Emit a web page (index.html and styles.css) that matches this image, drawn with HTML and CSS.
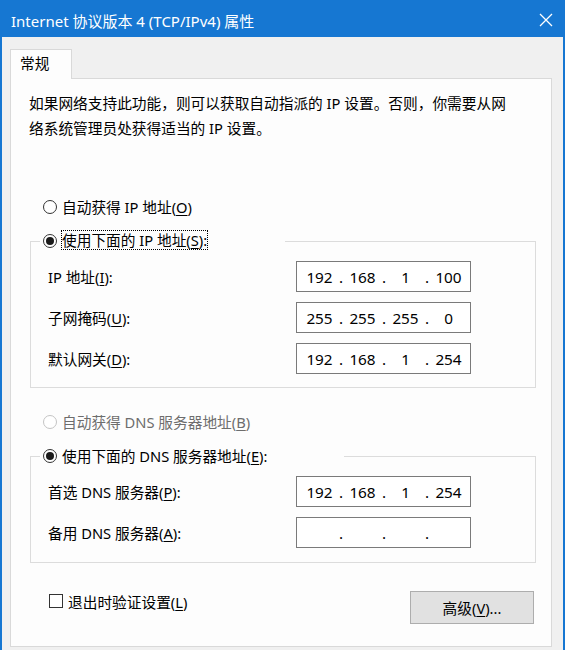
FILE: index.html
```html
<!DOCTYPE html>
<html lang="zh-CN">
<head>
<meta charset="utf-8">
<title>Internet 协议版本 4 (TCP/IPv4) 属性</title>
<link rel="stylesheet" href="styles.css">
</head>
<body>
<div class="window">
  <header class="titlebar">
    <span class="title">Internet 协议版本 4 (TCP/IPv4) 属性</span>
    <svg class="close" width="14" height="14" viewBox="0 0 14 14" aria-label="关闭">
      <path d="M1 1 L13 13 M13 1 L1 13" stroke="#fff" stroke-width="1.3" fill="none"/>
    </svg>
  </header>

  <div class="client">
    <div class="tabs">
      <div class="tab">常规</div>
    </div>

    <div class="panel">
      <p class="intro">如果网络支持此功能，则可以获取自动指派的 IP 设置。否则，你需要从网<br>络系统管理员处获得适当的 IP 设置。</p>

      <div class="radio auto-ip">
        <span class="circle"></span>
        <span class="text">自动获得 IP 地址(<u>O</u>)</span>
      </div>

      <fieldset class="group ip-group">
        <legend class="radio legend-ip">
          <span class="circle checked"></span>
          <span class="text focus">使用下面的 IP 地址(<u>S</u>):</span>
        </legend>
        <div class="rows">
          <div class="row">
            <span class="lbl">IP 地址(<u>I</u>):</span>
            <div class="ip"><span class="seg">192</span><span class="dot">.</span><span class="seg">168</span><span class="dot">.</span><span class="seg">1</span><span class="dot">.</span><span class="seg">100</span></div>
          </div>
          <div class="row">
            <span class="lbl">子网掩码(<u>U</u>):</span>
            <div class="ip"><span class="seg">255</span><span class="dot">.</span><span class="seg">255</span><span class="dot">.</span><span class="seg">255</span><span class="dot">.</span><span class="seg">0</span></div>
          </div>
          <div class="row">
            <span class="lbl">默认网关(<u>D</u>):</span>
            <div class="ip"><span class="seg">192</span><span class="dot">.</span><span class="seg">168</span><span class="dot">.</span><span class="seg">1</span><span class="dot">.</span><span class="seg">254</span></div>
          </div>
        </div>
      </fieldset>

      <div class="radio auto-dns disabled">
        <span class="circle"></span>
        <span class="text">自动获得 DNS 服务器地址(<u>B</u>)</span>
      </div>

      <fieldset class="group dns-group">
        <legend class="radio legend-dns">
          <span class="circle checked"></span>
          <span class="text">使用下面的 DNS 服务器地址(<u>E</u>):</span>
        </legend>
        <div class="rows">
          <div class="row">
            <span class="lbl">首选 DNS 服务器(<u>P</u>):</span>
            <div class="ip"><span class="seg">192</span><span class="dot">.</span><span class="seg">168</span><span class="dot">.</span><span class="seg">1</span><span class="dot">.</span><span class="seg">254</span></div>
          </div>
          <div class="row">
            <span class="lbl">备用 DNS 服务器(<u>A</u>):</span>
            <div class="ip"><span class="seg"></span><span class="dot">.</span><span class="seg"></span><span class="dot">.</span><span class="seg"></span><span class="dot">.</span><span class="seg"></span></div>
          </div>
        </div>
      </fieldset>

      <div class="footer">
        <div class="check">
          <span class="box"></span>
          <span class="text">退出时验证设置(<u>L</u>)</span>
        </div>
        <div class="button">高级(<u>V</u>)...</div>
      </div>
    </div>
  </div>
</div>
</body>
</html>
```

FILE: styles.css
```css
html, body {
  margin: 0;
  padding: 0;
}

body {
  width: 565px;
  height: 650px;
  overflow: hidden;
  font-family: "Noto Sans", "Noto Sans CJK SC", sans-serif;
  font-size: 14.7px;
  color: #000;
  background: #f0f0f0;
}

u {
  text-decoration-thickness: 1px;
  text-underline-offset: 2px;
}

/* window frame */
.window {
  display: flex;
  flex-direction: column;
  height: 650px;
  box-sizing: border-box;
  border-left: 2px solid #1677d2;
  border-right: 2px solid #1677d2;
}

.titlebar {
  display: flex;
  align-items: center;
  height: 37px;
  flex-shrink: 0;
  padding-left: 9px;
  background: #1677d2;
  color: #fff;
}

.title {
  font-size: 15px;
  line-height: 20px;
  margin-top: 4px;
}

.close {
  margin-left: auto;
  margin-right: 10px;
  margin-top: 2px;
}

/* dialog client area */
.client {
  flex: 1;
  display: flex;
  flex-direction: column;
  padding: 12px 11px 3px 8px;
}

.tabs {
  display: flex;
}

.tab {
  position: relative;
  z-index: 1;
  width: 62px;
  height: 30px;
  box-sizing: border-box;
  margin-bottom: -1px;
  padding-left: 9px;
  line-height: 26px;
  background: #fdfdfd;
  border: 1px solid #d9d9d9;
  border-bottom: none;
}

.panel {
  flex: 1;
  display: flex;
  flex-direction: column;
  background: #fdfdfd;
  border: 1px solid #d9d9d9;
  padding: 12px 17px 0 18px;
}

.intro {
  margin: 0;
  line-height: 25px;
}

/* radio buttons */
.radio {
  display: flex;
  align-items: center;
  height: 20px;
}

.radio .circle {
  width: 14px;
  height: 14px;
  box-sizing: border-box;
  border: 1px solid #333;
  border-radius: 50%;
  background: #fff;
  margin-right: 5px;
  flex-shrink: 0;
  display: flex;
  align-items: center;
  justify-content: center;
}

.radio .circle.checked::after {
  content: "";
  width: 8px;
  height: 8px;
  border-radius: 50%;
  background: #1a1a1a;
}

.radio .text {
  line-height: 20px;
  white-space: nowrap;
}

.radio .focus {
  margin-left: -1px;
  padding: 0 1px;
  outline: 1px dotted #000;
  outline-offset: -1px;
  margin-top: -3px;
}

.auto-ip {
  margin-top: 56px;
  padding-left: 14px;
}

.auto-dns {
  margin-top: 24px;
  padding-left: 14px;
}

.radio.disabled .circle {
  border-color: #c4c4c4;
}

.radio.disabled .text {
  color: #6d6d6d;
}

/* group boxes */
.group {
  width: 506px;
  box-sizing: border-box;
  margin: 14px 0 0 1px;
  padding: 10px 0 13px 9px;
  border: 1px solid #dcdcdc;
  min-width: 0;
}

.dns-group {
  margin-top: 14px;
  padding-bottom: 14px;
}

.group legend {
  box-sizing: border-box;
  padding: 0 0 0 3px;
}

.legend-ip {
  width: 245px;
}

.legend-dns {
  width: 304px;
}

.rows {
  display: flex;
  flex-direction: column;
  gap: 10px;
  padding-left: 8px;
}

.row {
  display: flex;
  align-items: center;
  height: 31px;
}

.lbl {
  width: 248px;
  flex-shrink: 0;
  white-space: nowrap;
}

/* IP address control */
.ip {
  display: flex;
  align-items: center;
  width: 175px;
  height: 31px;
  box-sizing: border-box;
  padding-left: 3px;
  border: 1px solid #7a7a7a;
  background: #fff;
  font-size: 15.3px;
}

.ip .seg {
  width: 39px;
  text-align: center;
}

.ip .dot {
  width: 4px;
  text-align: center;
}

/* footer */
.footer {
  display: flex;
  align-items: flex-start;
  margin-top: 28px;
}

.check {
  display: flex;
  align-items: center;
  height: 20px;
  padding-left: 20px;
}

.check .box {
  width: 14px;
  height: 14px;
  box-sizing: border-box;
  border: 1px solid #333;
  background: #fff;
  margin-right: 5px;
}

.button {
  margin-left: auto;
  width: 124px;
  height: 33px;
  box-sizing: border-box;
  display: flex;
  align-items: center;
  justify-content: center;
  background: #e1e1e1;
  border: 1px solid #adadad;
}
```
